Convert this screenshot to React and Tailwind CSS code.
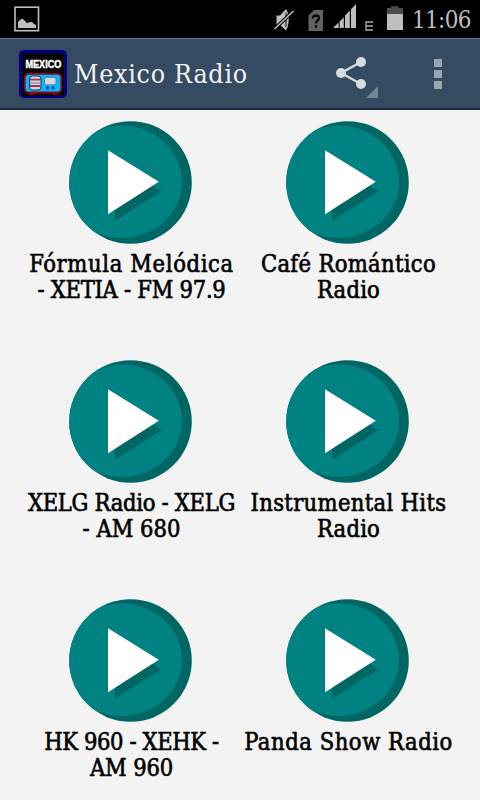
import React from 'react';

const STATIONS = [
  { lines: ['Fórmula Melódica', '- XETIA - FM 97.9'], tracking: ['tracking-[0.65px]', 'tracking-[-0.27px]'] },
  { lines: ['Café Romántico', 'Radio'], tracking: ['tracking-[0.33px]', 'tracking-[0.2px]'] },
  { lines: ['XELG Radio - XELG', '- AM 680'], tracking: ['tracking-[-0.3px]', 'tracking-[0px]'] },
  { lines: ['Instrumental Hits', 'Radio'], tracking: ['tracking-[0.33px]', 'tracking-[0.2px]'] },
  { lines: ['HK 960 - XEHK -', 'AM 960'], tracking: ['tracking-[-0.4px]', 'tracking-[-0.15px]'] },
  { lines: ['Panda Show Radio'], tracking: ['tracking-[0.55px]'] },
];

function StatusBar() {
  return (
    <div className="flex h-[38px] shrink-0 items-start bg-black">
      <svg width="260" height="38" viewBox="0 0 260 38" shapeRendering="geometricPrecision">
        <rect x="15" y="7.2" width="23.5" height="23.5" fill="none" stroke="#bebebe" strokeWidth="1.6" />
        <path d="M18 28V22L20 20L22 18.5L24 20L27 23L30 22L32 22L34 24L36 25V28Z" fill="#bebebe" />
      </svg>
      <svg width="150" height="38" viewBox="260 0 150 38">
        {/* muted speaker */}
        <path d="M276.5 15.5H280L286 9Q289.5 14 288.5 23Q288 28 286 30.5L280 25H276.5Z" fill="#bebebe" />
        <path d="M286 12.5V27" stroke="#333" strokeWidth="1.3" />
        <path d="M274 29.5L293 11.5" stroke="#000" strokeWidth="3.6" />
        <path d="M274.5 29L293.5 11" stroke="#bebebe" strokeWidth="1.5" />
        {/* sim card */}
        <path d="M314 10H323V31H308.5V15.5Z" fill="#626262" />
        <path d="M312.8 18.5Q313 15.5 316 15.5Q319 15.5 319 18Q319 19.7 317.4 20.7Q316 21.7 316 23.5M316 25.2V27.7" fill="none" stroke="#080808" strokeWidth="2.3" />
        {/* signal */}
        <path d="M333 28L338.6 22.4V28ZM339.6 28V21.4L343.8 17.2V28ZM345 28V15.4L349.8 10.4V28ZM351 28V9.2L356 4V28Z" fill="#bebebe" />
        <path d="M373 22H366V30H373M366 26H373" fill="none" stroke="#aaa" strokeWidth="1.3" />
        {/* battery */}
        <path d="M387 14V8H391V6.3H398.5V8H403V14Z" fill="#4c4c4c" />
        <rect x="387" y="14" width="16" height="16" fill="#bebebe" />
      </svg>
      <div className="ml-[2px] mt-1 whitespace-nowrap font-['DejaVu_Serif_Condensed','DejaVu_Serif',serif] text-[24px] leading-[32px] tracking-[-0.7px] text-[#bebebe]">
        11:06
      </div>
    </div>
  );
}

function AppLogo() {
  return (
    <svg className="overflow-visible" width="48" height="48" viewBox="0 0 48 48">
      <rect width="48" height="48" rx="5" fill="#000080" />
      <rect x="3" y="3" width="42" height="43" rx="3" fill="#080304" />
      <text
        x="6.4"
        y="17.6"
        textLength="36"
        lengthAdjust="spacingAndGlyphs"
        fill="#fff"
        stroke="#fff"
        strokeWidth="0.5"
        fontFamily="'Liberation Sans', sans-serif"
        fontWeight="bold"
        fontSize="11.5"
      >
        MEXICO
      </text>
      <path d="M11 42H16L14.5 45H10ZM32 42H37L38 45H34Z" fill="#8c0017" />
      <rect x="5.7" y="23.8" width="36.6" height="18.7" rx="4" fill="#00baff" stroke="#97001c" strokeWidth="1.8" />
      <rect x="10.5" y="26" width="11.5" height="14" rx="3" fill="#d5d5e3" stroke="#17364d" strokeWidth="1" />
      <path d="M10.8 29.7H21.8M10.8 36H21.8" stroke="#a3344c" strokeWidth="1.8" />
      <path d="M11 33H21.7" stroke="#745c73" strokeWidth="0.8" />
      <rect x="25.5" y="27.3" width="11.6" height="7.6" rx="2" fill="#d5d5e3" stroke="#52799a" strokeWidth="1" />
      <circle cx="28.5" cy="37.9" r="1.6" fill="#003ca2" />
      <circle cx="34" cy="37.9" r="1.6" fill="#003ca2" />
    </svg>
  );
}

function ActionBar() {
  return (
    <header className="flex h-[72px] shrink-0 items-center border-b-2 border-t border-b-[#172939] border-t-[#5d7587] bg-[#344b61] pl-[19px]">
      <AppLogo />
      <h1 className="ml-[7px] w-[250px] whitespace-nowrap pt-px font-['DejaVu_Serif_Condensed','DejaVu_Serif',serif] text-[26.5px] leading-[36px] tracking-[0.75px] text-[#f3f3f3]">
        Mexico Radio
      </h1>
      <button className="ml-[10px]" aria-label="Share">
        <svg width="48" height="48" viewBox="334 50 48 48">
          <path d="M361 62L341 73L361 84" fill="none" stroke="#d6dce1" strokeWidth="2.3" />
          <circle cx="341" cy="73" r="5" fill="#d6dce1" />
          <circle cx="361" cy="62" r="5" fill="#d6dce1" />
          <circle cx="361" cy="84" r="5" fill="#d6dce1" />
          <path d="M378 86V98H366Z" fill="#748694" />
        </svg>
      </button>
      <button className="ml-[52px] flex flex-col gap-[3px]" aria-label="More options">
        <span className="size-2 bg-[#9ba7b0]" />
        <span className="size-2 bg-[#9ba7b0]" />
        <span className="size-2 bg-[#9ba7b0]" />
      </button>
    </header>
  );
}

function PlayIcon() {
  return (
    <svg className="shrink-0" width="123" height="123" viewBox="0 0 123 123">
      <defs>
        <clipPath id="disc">
          <circle cx="61.5" cy="61.5" r="61.3" />
        </clipPath>
      </defs>
      <circle cx="61.5" cy="61.5" r="61.3" fill="#006664" />
      <ellipse cx="52.5" cy="60.8" rx="60.5" ry="56.3" fill="#008282" clipPath="url(#disc)" />
      <path d="M46 88V99.7L92.4 70.2L84 64.5Z" fill="#006664" />
      <path d="M39 29.2L89.8 60.8L39 93.3Z" fill="#fff" />
    </svg>
  );
}

function Station({ station }) {
  return (
    <div className="flex h-[239px] flex-col items-center">
      <PlayIcon />
      <div className="mt-[7px] pl-[2px] text-center font-['DejaVu_Serif_Condensed','DejaVu_Serif',serif] text-[23.5px] leading-[26px] text-black [-webkit-text-stroke:0.6px_black]">
        {station.lines.map((line, i) => (
          <div key={line} className={`whitespace-nowrap ${station.tracking[i]}`}>
            {line}
          </div>
        ))}
      </div>
    </div>
  );
}

export default function App() {
  return (
    <div className="flex h-[800px] w-[480px] flex-col overflow-hidden bg-[#f3f3f3]">
      <StatusBar />
      <ActionBar />
      <main className="grid grid-cols-[217px_217px] pl-[22px] pt-[11px]">
        {STATIONS.map((station) => (
          <Station key={station.lines[0]} station={station} />
        ))}
      </main>
    </div>
  );
}
